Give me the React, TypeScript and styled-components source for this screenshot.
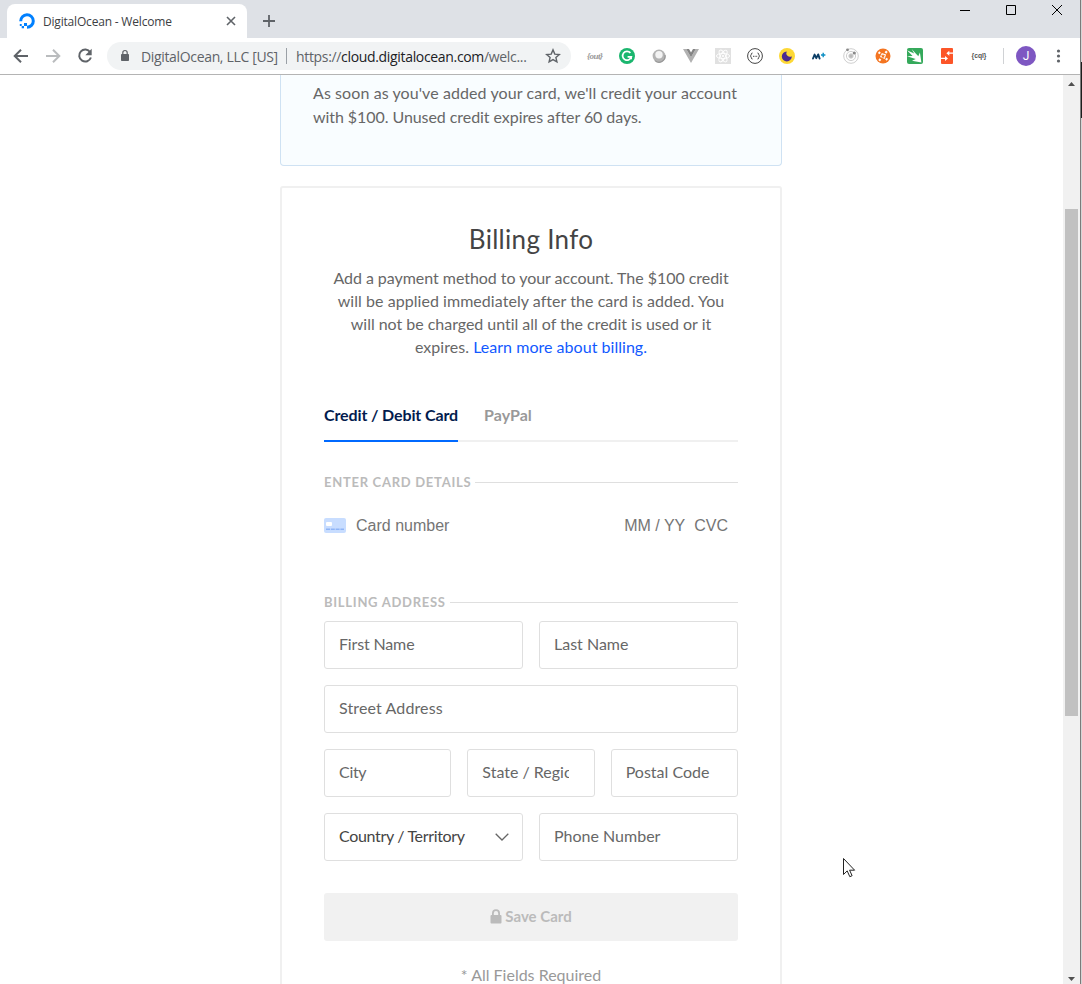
import React from 'react';
import styled, { createGlobalStyle } from 'styled-components';

const GlobalStyle = createGlobalStyle`
  * { box-sizing: border-box; }
  body { margin: 0; background: #fff; overflow: hidden; }
`;

const brand = '"Lato", "Open Sans", sans-serif';
const system = '"Open Sans", "Noto Sans", sans-serif';

const Desktop = styled.div`
  position: relative;
  display: flex;
  width: 1082px;
  height: 984px;
  overflow: hidden;
  background: #fff;
`;

const Browser = styled.div`
  display: flex;
  flex-direction: column;
  width: 1080px;
  height: 984px;
`;

const WindowEdge = styled.div`
  width: 2px;
  border-left: 1px solid #7b7b7b;
  background: linear-gradient(#d5d5d5 0 62px, #1d1d1d 62px 118px, #d5d5d5 118px);
`;

const TabStrip = styled.div`
  display: flex;
  height: 38px;
  background: #dee1e6;
`;

const BrowserTab = styled.div`
  display: flex;
  align-items: center;
  width: 240px;
  height: 34px;
  margin: 4px 0 0 7px;
  padding: 0 11px 0 12px;
  border-radius: 8px 8px 0 0;
  background: #fff;
`;

const TabTitle = styled.span`
  flex: 1;
  margin-left: 8px;
  font: 12px ${system};
  letter-spacing: -0.19px;
  color: #3c4043;
  white-space: nowrap;
`;

const NewTab = styled.div`
  display: flex;
  align-items: center;
  margin: 4px 0 0 15px;
`;

const WindowControls = styled.div`
  display: flex;
  gap: 36px;
  margin: 5px 18px 0 auto;
`;

const Toolbar = styled.div`
  display: flex;
  align-items: center;
  height: 37px;
  padding-left: 12px;
  border-bottom: 1px solid #b4b4b4;
  background: #fff;
`;

const NavButtons = styled.div`
  display: flex;
  gap: 14px;
  width: 95px;
`;

const AddressBar = styled.div`
  display: flex;
  align-items: center;
  width: 464px;
  height: 28px;
  margin-right: 8px;
  padding: 0 10px 0 12px;
  border-radius: 14px;
  background: #f1f3f4;
  font: 14px ${system};
  color: #5f6368;
  white-space: nowrap;
`;

const SiteOwner = styled.span`
  margin-left: 10px;
  width: 145px;
  letter-spacing: -0.34px;
`;

const Separator = styled.span<{ $color: string; $indent?: number }>`
  width: 1px;
  height: 16px;
  margin-left: ${(p) => p.$indent ?? 0}px;
  background: ${(p) => p.$color};
`;

const Url = styled.span`
  flex: 1;
  margin-left: 9px;
  letter-spacing: -0.33px;
  b { font-weight: 400; color: #202124; }
`;

const Extension = styled.span`
  display: flex;
  align-items: center;
  justify-content: center;
  width: 32px;
  height: 20px;
`;

const Avatar = styled.span`
  width: 20px;
  height: 20px;
  margin: 0 18px 0 12px;
  border-radius: 50%;
  background: #7e57c2;
  color: #fff;
  font: 12px/20px Roboto, sans-serif;
  text-align: center;
`;

const Viewport = styled.div`
  display: flex;
  flex: 1;
  min-height: 0;
`;

const Page = styled.main`
  width: 1063px;
  padding-left: 280px;
  overflow: hidden;
  font-family: ${brand};
`;

const Notice = styled.section`
  width: 502px;
  height: 91px;
  padding: 6px 32px 0;
  border: 1px solid #cfe2f3;
  border-top: 0;
  border-radius: 0 0 4px 4px;
  background: #f9fdff;
  color: #676767;
  font-size: 16px;
  line-height: 24px;
`;

const Line = styled.span<{ $spacing?: number }>`
  display: block;
  letter-spacing: ${(p) => p.$spacing ?? 0}px;
  white-space: nowrap;
`;

const Card = styled.section`
  width: 502px;
  height: 860px;
  margin-top: 20px;
  padding: 34px 42px 0;
  border: 2px solid #f0f0f0;
  border-radius: 3px;
`;

const Heading = styled.h1`
  margin: 0;
  color: #444;
  font-size: 26px;
  font-weight: 400;
  line-height: 35px;
  letter-spacing: 0.3px;
  text-align: center;
`;

const Description = styled.div`
  margin-top: 9px;
  color: #676767;
  font-size: 16px;
  line-height: 23px;
  text-align: center;
`;

const Link = styled.a`
  color: #1259ff;
  text-decoration: none;
`;

const Tabs = styled.div`
  display: flex;
  gap: 26px;
  height: 46px;
  margin-top: 38px;
  border-bottom: 2px solid #f0f0f0;
`;

const PaymentTab = styled.div<{ $active?: boolean }>`
  height: 46px;
  width: ${(p) => (p.$active ? '134px' : 'auto')};
  border-bottom: ${(p) => (p.$active ? '2px solid #0069ff' : '0')};
  color: ${(p) => (p.$active ? '#031b4e' : '#999')};
  font-size: 16px;
  font-weight: 700;
  line-height: 38px;
  letter-spacing: ${(p) => (p.$active ? '-0.12px' : '0.05px')};
  white-space: nowrap;
`;

const SectionTitle = styled.h2<{ $top: number }>`
  display: flex;
  align-items: center;
  gap: 4px;
  margin: ${(p) => p.$top}px 0 0;
  color: #bbb;
  font-size: 13px;
  font-weight: 700;
  line-height: 20px;
  letter-spacing: 0.72px;
  white-space: nowrap;
  &::after {
    content: '';
    flex: 1;
    height: 1px;
    background: #dfdfdf;
  }
`;

const CardRow = styled.div`
  display: flex;
  align-items: center;
  height: 20px;
  margin-top: 23px;
  padding-right: 10px;
  color: #757575;
  font: 16px/20px "Liberation Sans", Arial, sans-serif;
  white-space: nowrap;
  span { padding-top: 2px; }
`;

const CardNumber = styled.span`
  flex: 1;
  margin-left: 10px;
`;

const Expiry = styled.span`
  margin-right: 9px;
`;

const Fields = styled.form`
  display: grid;
  gap: 16px;
  margin-top: 9px;
`;

const FieldRow = styled.div<{ $columns: number }>`
  display: grid;
  grid-template-columns: repeat(${(p) => p.$columns}, minmax(0, 1fr));
  gap: 16px;
`;

const Input = styled.input<{ $spacing?: number }>`
  width: 100%;
  height: 48px;
  padding: 0 25px 3px 14px;
  border: 1px solid #dfdfdf;
  border-radius: 3px;
  outline: 0;
  background: #fff;
  font: 16px ${brand};
  letter-spacing: ${(p) => p.$spacing ?? 0}px;
  &::placeholder { color: #676767; opacity: 1; }
`;

const Select = styled.div`
  display: flex;
  align-items: center;
  justify-content: space-between;
  height: 48px;
  padding: 0 13px 0 14px;
  border: 1px solid #dfdfdf;
  border-radius: 3px;
  color: #444;
  font-size: 16px;
  letter-spacing: -0.33px;
  white-space: nowrap;
  span { padding-bottom: 3px; }
`;

const SaveButton = styled.button`
  display: flex;
  align-items: center;
  justify-content: center;
  gap: 3px;
  width: 100%;
  height: 48px;
  margin-top: 32px;
  padding: 0 0 2px;
  border: 0;
  border-radius: 3px;
  background: #f1f1f1;
  color: #bbb;
  font: 700 15px ${brand};
`;

const Footnote = styled.p`
  margin: 24px 0 0;
  color: #999;
  font-size: 16px;
  line-height: 20px;
  text-align: center;
`;

const Scrollbar = styled.div`
  display: flex;
  flex-direction: column;
  align-items: center;
  width: 17px;
  background: #f1f1f1;
`;

const ScrollThumb = styled.div`
  width: 13px;
  height: 507px;
  margin: 121px 0 auto;
  background: #c1c1c1;
`;

const ScrollArrow = styled.svg`
  width: 17px;
  height: 13px;
  fill: #505050;
`;

const Pointer = styled.svg`
  position: absolute;
  left: 843px;
  top: 858px;
`;

const DigitalOceanLogo = () => (
  <svg width="16" height="16" viewBox="0 0 16 16">
    <path d="M1.7 8.2A6.3 6.3 0 1 1 8 14.3" fill="none" stroke="#0080ff" strokeWidth="3" />
    <path d="M5 10h3v3H5zM2.7 13H5v2.2H2.7zM.8 11.1h1.9V13H.8z" fill="#0080ff" />
  </svg>
);

const Extensions = () => (
  <>
    <Extension>
      <svg width="24" height="20" viewBox="0 0 24 20">
        <text x="4" y="13" fontSize="9" fontWeight="700" fontStyle="italic" fontFamily="Liberation Serif" fill="#999" textLength="16">{'{out}'}</text>
      </svg>
    </Extension>
    <Extension>
      <svg width="16" height="16" viewBox="0 0 16 16">
        <circle cx="8" cy="8" r="8" fill="#1bb66e" />
        <path d="M11.4 4.9A4.4 4.4 0 1 0 12.3 8.8H8.6" fill="none" stroke="#fff" strokeWidth="1.7" />
        <path d="m12.9 11.8.2-3-2.6.1z" fill="#fff" />
      </svg>
    </Extension>
    <Extension>
      <svg width="16" height="16" viewBox="0 0 16 16">
        <circle cx="8" cy="8" r="6.4" fill="#b4b4b4" />
        <path d="M4 12.6A6 6 0 0 0 14 7" fill="none" stroke="#969696" strokeWidth="1.2" />
        <circle cx="8" cy="6.8" r="3.7" fill="#f3f3f3" />
      </svg>
    </Extension>
    <Extension>
      <svg width="16" height="14" viewBox="0 0 16 14">
        <path d="M0 0h3.2L8 8.3 12.8 0H16L8 14z" fill="#b1b1b1" />
        <path d="M3.2 0H6l2 3.5L10 0h2.8L8 8.3z" fill="#858585" />
      </svg>
    </Extension>
    <Extension>
      <svg width="16" height="16" viewBox="0 0 16 16">
        <path d="M0 0h16v16H0z" fill="#e1e1e1" />
        <g fill="none" stroke="#fff" strokeWidth=".9">
          <ellipse cx="8" cy="8" rx="6.6" ry="2.6" />
          <ellipse cx="8" cy="8" rx="6.6" ry="2.6" transform="rotate(60 8 8)" />
          <ellipse cx="8" cy="8" rx="6.6" ry="2.6" transform="rotate(120 8 8)" />
        </g>
        <circle cx="8" cy="8" r="1.1" fill="#fff" />
      </svg>
    </Extension>
    <Extension>
      <svg width="16" height="16" viewBox="0 0 16 16" fill="none" stroke="#444" strokeWidth="1">
        <circle cx="8" cy="8" r="7.4" />
        <path d="M5.5 5q-1.2 0-1.2 1.3T3.3 8q1 .3 1 1.7T5.5 11M10.5 5q1.2 0 1.2 1.3T12.7 8q-1 .3-1 1.7T10.5 11" />
        <path d="M6 8.3h1M7.6 8.3h1M9.2 8.3h1" />
      </svg>
    </Extension>
    <Extension>
      <svg width="16" height="16" viewBox="0 0 16 16">
        <circle cx="8" cy="8" r="8" fill="#fdd835" />
        <path d="M7.7 3.4A3.7 3.7 0 0 0 12.8 8.3 5 5 0 1 1 7.7 3.4z" fill="#4b2a91" />
      </svg>
    </Extension>
    <Extension>
      <svg width="16" height="10" viewBox="0 0 16 10" fill="none" stroke="#0b3e66">
        <path d="M2 7.5 3.6 3.6 5.3 7.2 7.2 3.4 8.6 7.5" strokeWidth="1.9" strokeLinecap="round" strokeLinejoin="round" />
        <path d="M10 4h4.4M12.2 1.8v4.4" stroke="#0c8fc4" strokeWidth="1.4" />
      </svg>
    </Extension>
    <Extension>
      <svg width="16" height="16" viewBox="0 0 16 16" fill="none" stroke="#cfcfcf">
        <circle cx="8" cy="8" r="7.3" />
        <circle cx="8" cy="8" r="4.6" />
        <circle cx="8" cy="8" r="2.2" fill="#bbb" />
        <circle cx="4.5" cy="1.8" r="1.4" fill="#888" stroke="none" />
        <circle cx="11.3" cy="5" r="1.6" fill="#888" stroke="none" />
      </svg>
    </Extension>
    <Extension>
      <svg width="16" height="16" viewBox="0 0 16 16">
        <circle cx="8" cy="8" r="7.5" fill="#f47521" />
        <path d="M5.1 5.5 3.6 4.2M10.9 10.5l1.5 1.3M10.4 5l1.5-1.7M5.5 11l-1.4 1.7" stroke="#fff" strokeWidth="2.2" />
        <path d="M5 8.9 6.8 5.1l4.3 1.5L9.7 11z" fill="#fff" />
        <path d="m8 6 .6 1.3 1.5.2L9 8.5l.3 1.5L8 9.3l-1.3.7L7 8.5l-1.1-1 1.5-.2z" fill="#f47521" />
      </svg>
    </Extension>
    <Extension>
      <svg width="16" height="16" viewBox="0 0 16 16">
        <rect width="16" height="16" rx="2" fill="#35a95b" />
        <path d="M0 2.2 7.2 5.4 4.6 1 11.3 8.2 12.9 4.6 14.4 14.4 5 12.7 8.7 11 0 8.2 5.6 8z" fill="#fff" />
      </svg>
    </Extension>
    <Extension>
      <svg width="12" height="16" viewBox="0 0 12 16">
        <rect width="12" height="16" rx="1" fill="#fc5528" />
        <path d="M12 5.2H7.5M0 10.4h5" stroke="#fff" strokeWidth="1.3" />
        <path d="M8.3 2.7v5L5.4 5.2zM4 7.9v5l3-2.5z" fill="#fff" />
      </svg>
    </Extension>
    <Extension>
      <svg width="20" height="16" viewBox="0 0 20 16">
        <text x="2.5" y="10.3" fontSize="7" fontWeight="700" fontFamily="Liberation Sans" fill="#555" textLength="15" lengthAdjust="spacingAndGlyphs">{'{cql}'}</text>
      </svg>
    </Extension>
  </>
);

export default function App() {
  return (
    <Desktop>
      <GlobalStyle />
      <Browser>
        <TabStrip>
          <BrowserTab>
            <DigitalOceanLogo />
            <TabTitle>DigitalOcean - Welcome</TabTitle>
            <svg width="10" height="10" viewBox="0 0 10 10" stroke="#5f6368" strokeWidth="1.6">
              <path d="m1 1 8 8M9 1 1 9" />
            </svg>
          </BrowserTab>
          <NewTab>
            <svg width="14" height="14" viewBox="0 0 14 14" stroke="#5f6368" strokeWidth="1.8">
              <path d="M1 7h12M7 1v12" />
            </svg>
          </NewTab>
          <WindowControls>
            <svg width="10" height="10" stroke="#000"><path d="M0 5.5h10" /></svg>
            <svg width="10" height="10" fill="none" stroke="#000"><path d="M.5.5h9v9h-9z" /></svg>
            <svg width="10" height="10" stroke="#000"><path d="m0 0 10 10M10 0 0 10" /></svg>
          </WindowControls>
        </TabStrip>
        <Toolbar>
          <NavButtons>
            <svg width="18" height="18" viewBox="0 0 18 18" fill="none" stroke="#5f6368" strokeWidth="2">
              <path d="M16 9H3M9 2.7 2.7 9 9 15.3" />
            </svg>
            <svg width="18" height="18" viewBox="0 0 18 18" fill="none" stroke="#babcbe" strokeWidth="2">
              <path d="M2 9h13M9 2.7 15.3 9 9 15.3" />
            </svg>
            <svg width="18" height="18" viewBox="0 0 18 18" fill="none" stroke="#5f6368" strokeWidth="2">
              <path d="M14.2 5.2A6 6 0 1 0 14.9 10.5" />
              <path d="M15.7 1.8v6.4H9.3z" fill="#5f6368" stroke="none" />
            </svg>
          </NavButtons>
          <AddressBar>
            <svg width="12" height="14" viewBox="0 0 12 14">
              <path d="M2.5 5.5h7v6h-7z" fill="#5f6368" stroke="#5f6368" strokeLinejoin="round" />
              <path d="M3.8 5.5V3.7a2.2 2.2 0 0 1 4.4 0v1.8" fill="none" stroke="#5f6368" strokeWidth="1.2" />
            </svg>
            <SiteOwner>DigitalOcean, LLC [US]</SiteOwner>
            <Separator $color="#9aa0a6" />
            <Url>https://<b>cloud.digitalocean.com</b>/welc...</Url>
            <svg width="16" height="16" viewBox="0 0 16 16" fill="none" stroke="#5f6368" strokeWidth="1.4">
              <path d="m8 1.9 1.8 4.2 4.5.4-3.4 3 1 4.4L8 11.6l-3.9 2.3 1-4.4-3.4-3 4.5-.4z" />
            </svg>
          </AddressBar>
          <Extensions />
          <Separator $color="#d0d2d5" $indent={8} />
          <Avatar>J</Avatar>
          <svg width="8" height="14" viewBox="0 0 8 14" fill="#5f6368">
            <circle cx="4.5" cy="2" r="1.6" /><circle cx="4.5" cy="7" r="1.6" /><circle cx="4.5" cy="12" r="1.6" />
          </svg>
        </Toolbar>
        <Viewport>
          <Page>
            <Notice>
              <Line $spacing={0.085}>As soon as you've added your card, we'll credit your account</Line>
              <Line $spacing={-0.065}>with $100. Unused credit expires after 60 days.</Line>
            </Notice>
            <Card>
              <Heading>Billing Info</Heading>
              <Description>
                <Line $spacing={-0.04}>Add a payment method to your account. The $100 credit</Line>
                <Line $spacing={0.05}>will be applied immediately after the card is added. You</Line>
                <Line $spacing={-0.03}>will not be charged until all of the credit is used or it</Line>
                <Line $spacing={0.03}>expires. <Link>Learn more about billing.</Link></Line>
              </Description>
              <Tabs>
                <PaymentTab $active>Credit / Debit Card</PaymentTab>
                <PaymentTab>PayPal</PaymentTab>
              </Tabs>
              <SectionTitle $top={30}>ENTER CARD DETAILS</SectionTitle>
              <CardRow>
                <svg width="22" height="15" viewBox="0 0 22 15">
                  <rect width="22" height="15" rx="2" fill="#c8ddff" />
                  <rect x="2" y="4" width="6" height="4" rx="1" fill="#fff" />
                  <path d="M2 11.2h18" stroke="#8fb5f7" strokeWidth="1.4" strokeDasharray="4 .8" />
                </svg>
                <CardNumber>Card number</CardNumber>
                <Expiry>MM / YY</Expiry>
                <span>CVC</span>
              </CardRow>
              <SectionTitle $top={57}>BILLING ADDRESS</SectionTitle>
              <Fields>
                <FieldRow $columns={2}>
                  <Input placeholder="First Name" $spacing={-0.15} />
                  <Input placeholder="Last Name" />
                </FieldRow>
                <Input placeholder="Street Address" $spacing={0.12} />
                <FieldRow $columns={3}>
                  <Input placeholder="City" $spacing={-0.3} />
                  <Input placeholder="State / Region" />
                  <Input placeholder="Postal Code" />
                </FieldRow>
                <FieldRow $columns={2}>
                  <Select>
                    <span>Country / Territory</span>
                    <svg width="14" height="8" viewBox="0 0 14 8" fill="none" stroke="#666" strokeWidth="1.3">
                      <path d="m.7.8 6.3 6.2L13.3.8" />
                    </svg>
                  </Select>
                  <Input placeholder="Phone Number" />
                </FieldRow>
              </Fields>
              <SaveButton disabled>
                <svg width="12" height="15" viewBox="0 0 12 15">
                  <rect x=".5" y="6" width="11" height="8.5" rx="1" fill="#bbb" />
                  <path d="M2.9 7V4.2a3.1 3.1 0 0 1 6.2 0V7" fill="none" stroke="#bbb" strokeWidth="1.8" />
                </svg>
                Save Card
              </SaveButton>
              <Footnote>* All Fields Required</Footnote>
            </Card>
          </Page>
          <Scrollbar>
            <ScrollArrow viewBox="0 0 17 13"><path d="M5 11h7L8.5 7z" /></ScrollArrow>
            <ScrollThumb />
            <ScrollArrow viewBox="0 0 17 13"><path d="M5 6h7l-3.5 4z" /></ScrollArrow>
          </Scrollbar>
        </Viewport>
      </Browser>
      <WindowEdge />
      <Pointer width="13" height="20" viewBox="0 0 13 20">
        <path d="M.5.5v16l3.7-3.6 2.6 5.8 2.3-1-2.5-5.5h5z" fill="#fff" stroke="#222" />
      </Pointer>
    </Desktop>
  );
}
